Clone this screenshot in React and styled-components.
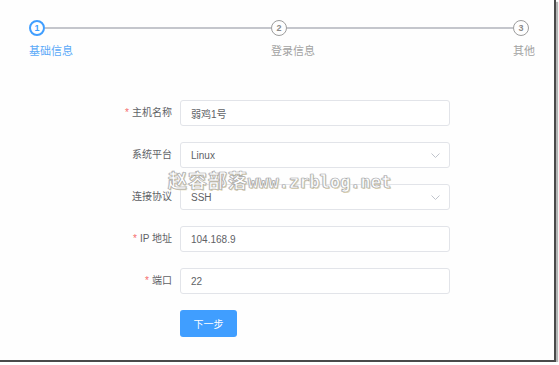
import React from 'react'
import styled, { createGlobalStyle } from 'styled-components'

const GlobalStyle = createGlobalStyle`
    body {
        margin: 0;
        background: #ffffff;
        font-family: "Liberation Sans", "Noto Sans CJK SC", sans-serif;
    }
`;

const Frame = styled.div`
    position: relative;
    width: 554px;
    height: 360px;
    background: #fefefe;
    border-right: 2px solid #4a4a4a;
    border-bottom: 2px solid #4a4a4a;
    box-shadow: 2px 2px 1px #b5b5b5;
    overflow: hidden;
`;

const Steps = styled.div`
    display: flex;
    padding: 20px 19px 0 29px;
`;

const Step = styled.div`
    flex: ${p => (p.$last ? '0 0 auto' : '1 1 0')};
    display: flex;
    flex-direction: column;
`;

const StepHead = styled.div`
    display: flex;
    align-items: center;
    height: 16px;
`;

const Circle = styled.div`
    box-sizing: border-box;
    width: 16px;
    height: 16px;
    border-radius: 50%;
    border: ${p => (p.$active ? '2px solid #409eff' : '1.5px solid #9c9c9c')};
    color: ${p => (p.$active ? '#409eff' : '#8a8a8a')};
    font-size: 9px;
    font-weight: bold;
    display: flex;
    align-items: center;
    justify-content: center;
    flex-shrink: 0;
`;

const Line = styled.div`
    flex: 1;
    height: 2px;
    background: #c4c6cc;
`;

const StepTitle = styled.div`
    margin-top: 7px;
    font-size: 11px;
    line-height: 16px;
    color: ${p => (p.$active ? '#5aa9f8' : '#a2a2a2')};
`;

const Form = styled.div`
    display: grid;
    grid-template-columns: 80px 270px;
    row-gap: 16px;
    margin: 41px 0 0 100px;
`;

const Label = styled.div`
    padding-right: 8px;
    text-align: right;
    font-size: 10px;
    line-height: 26px;
    color: #606266;
`;

const Star = styled.span`
    color: #f56c6c;
    margin-right: 3px;
`;

const Field = styled.div`
    box-sizing: border-box;
    height: 26px;
    border: 1px solid #e2e4e9;
    border-radius: 3px;
    background: #fff;
    display: flex;
    align-items: center;
    justify-content: space-between;
    padding: 0 9px 0 10px;
    font-size: 10px;
    color: #606266;
`;

const Button = styled.button`
    grid-column: 2;
    width: 57px;
    height: 27px;
    border: none;
    border-radius: 3px;
    background: #409eff;
    color: #fff;
    font-family: inherit;
    font-size: 10px;
    padding: 0;
`;

const Watermark = styled.div`
    position: absolute;
    left: 168px;
    top: 166px;
    font-weight: bold;
    color: #ffffff;
    -webkit-text-stroke: 0.6px #a4a4a4;
    text-shadow: 1px 1px 0 #e4d8b4, -1px 0 0 #cbd5e8;
    white-space: nowrap;
    pointer-events: none;
`;

const MarkCn = styled.span`
    font-family: "Noto Sans CJK SC", sans-serif;
    font-size: 19px;
    letter-spacing: 1px;
`;

const MarkEn = styled.span`
    font-family: "DejaVu Sans Mono", monospace;
    font-size: 17px;
`;

const Chevron = () => (
    <svg width="9" height="5" viewBox="0 0 9 5">
        <path d="M0.5 0.5 L4.5 4.5 L8.5 0.5" fill="none" stroke="#c0c4cc" strokeWidth="1" />
    </svg>
);

const steps = ['基础信息', '登录信息', '其他'];

const rows = [
    { label: '主机名称', value: '弱鸡1号', required: true },
    { label: '系统平台', value: 'Linux', select: true },
    { label: '连接协议', value: 'SSH', select: true },
    { label: 'IP 地址', value: '104.168.9', required: true },
    { label: '端口', value: '22', required: true },
];

const App = () => {
    return (
        <Frame>
            <GlobalStyle />
            <Steps>
                {steps.map((s, i) => (
                    <Step key={s} $last={i === steps.length - 1}>
                        <StepHead>
                            <Circle $active={i === 0}>{i + 1}</Circle>
                            {i < steps.length - 1 && <Line />}
                        </StepHead>
                        <StepTitle $active={i === 0}>{s}</StepTitle>
                    </Step>
                ))}
            </Steps>
            <Form>
                {rows.map(r => (
                    <React.Fragment key={r.label}>
                        <Label>
                            {r.required && <Star>*</Star>}
                            {r.label}
                        </Label>
                        <Field>
                            <span>{r.value}</span>
                            {r.select && <Chevron />}
                        </Field>
                    </React.Fragment>
                ))}
                <Button>下一步</Button>
            </Form>
            <Watermark>
                <MarkCn>赵容部落</MarkCn>
                <MarkEn>www.zrblog.net</MarkEn>
            </Watermark>
        </Frame>
    )
}

export default App
